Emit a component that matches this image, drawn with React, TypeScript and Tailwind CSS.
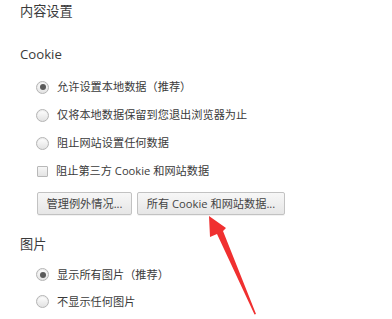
const Radio = ({ checked }: { checked?: boolean }) => (
  <span className="flex items-center justify-center w-[13px] h-[13px] rounded-full border border-[#b4b4b4] bg-gradient-to-b from-[#ffffff] to-[#e2e2e2] shadow-[inset_0_1px_1px_rgba(0,0,0,0.08)]">
    {checked && <span className="w-[6px] h-[6px] rounded-full bg-[#5a5a5a]" />}
  </span>
)

const Checkbox = () => (
  <span className="w-[11px] h-[11px] ml-[1px] border border-[#b8b8b8] bg-gradient-to-b from-[#f6f6f6] to-[#e4e4e4] rounded-[1px]" />
)

const Row = ({ children, h = "h-[28px]" }: { children: React.ReactNode; h?: string }) => (
  <div className={`flex items-center ${h} pl-[16px]`}>{children}</div>
)

const Label = ({ children }: { children: React.ReactNode }) => (
  <span className="ml-[8px] text-[11.2px] text-[#3a3a3a]">{children}</span>
)

const Btn = ({ children, w }: { children: React.ReactNode; w: string }) => (
  <button className={`${w} h-[23px] flex items-center justify-center rounded-[2px] border border-[#c2c2c2] bg-gradient-to-b from-[#f7f7f7] to-[#e6e6e6] text-[11.2px] text-[#444] shadow-[0_1px_0_rgba(0,0,0,0.05)]`}>
    {children}
  </button>
)

export default function App() {
  return (
    <main
      className="relative w-[392px] h-[319px] overflow-hidden bg-white pl-[20px] leading-none"
      style={{ fontFamily: '"Open Sans", "Noto Sans CJK SC", sans-serif' }}
    >
      <div className="flex items-center h-[24px] text-[13.2px] text-[#3a3a3a]">内容设置</div>

      <div className="flex items-center h-[24px] mt-[19px] text-[13.2px] text-[#3a3a3a]">Cookie</div>

      <div className="mt-[6px]">
        <Row>
          <Radio checked />
          <Label>允许设置本地数据（推荐）</Label>
        </Row>
        <Row>
          <Radio />
          <Label>仅将本地数据保留到您退出浏览器为止</Label>
        </Row>
        <Row>
          <Radio />
          <Label>阻止网站设置任何数据</Label>
        </Row>
        <Row>
          <Checkbox />
          <Label>阻止第三方 Cookie 和网站数据</Label>
        </Row>
      </div>

      <div className="flex gap-[5px] mt-[7px] pl-[17px]">
        <Btn w="w-[95px]">管理例外情况...</Btn>
        <Btn w="w-[148px]">所有 Cookie 和网站数据...</Btn>
      </div>

      <div className="flex items-center h-[24px] mt-[18px] text-[13.2px] text-[#3a3a3a]">图片</div>

      <div className="mt-[4px]">
        <Row h="h-[27px]">
          <Radio checked />
          <Label>显示所有图片（推荐）</Label>
        </Row>
        <Row h="h-[27px]">
          <Radio />
          <Label>不显示任何图片</Label>
        </Row>
      </div>

      {/* red annotation arrow */}
      <svg className="absolute left-0 top-0 pointer-events-none" width="392" height="319" viewBox="0 0 392 319">
        <path d="M209 216 L226 228 L223 231 L256 314 L254.5 314.5 L217 234 L210 237 Z" fill="#f03030" />
      </svg>
    </main>
  )
}
